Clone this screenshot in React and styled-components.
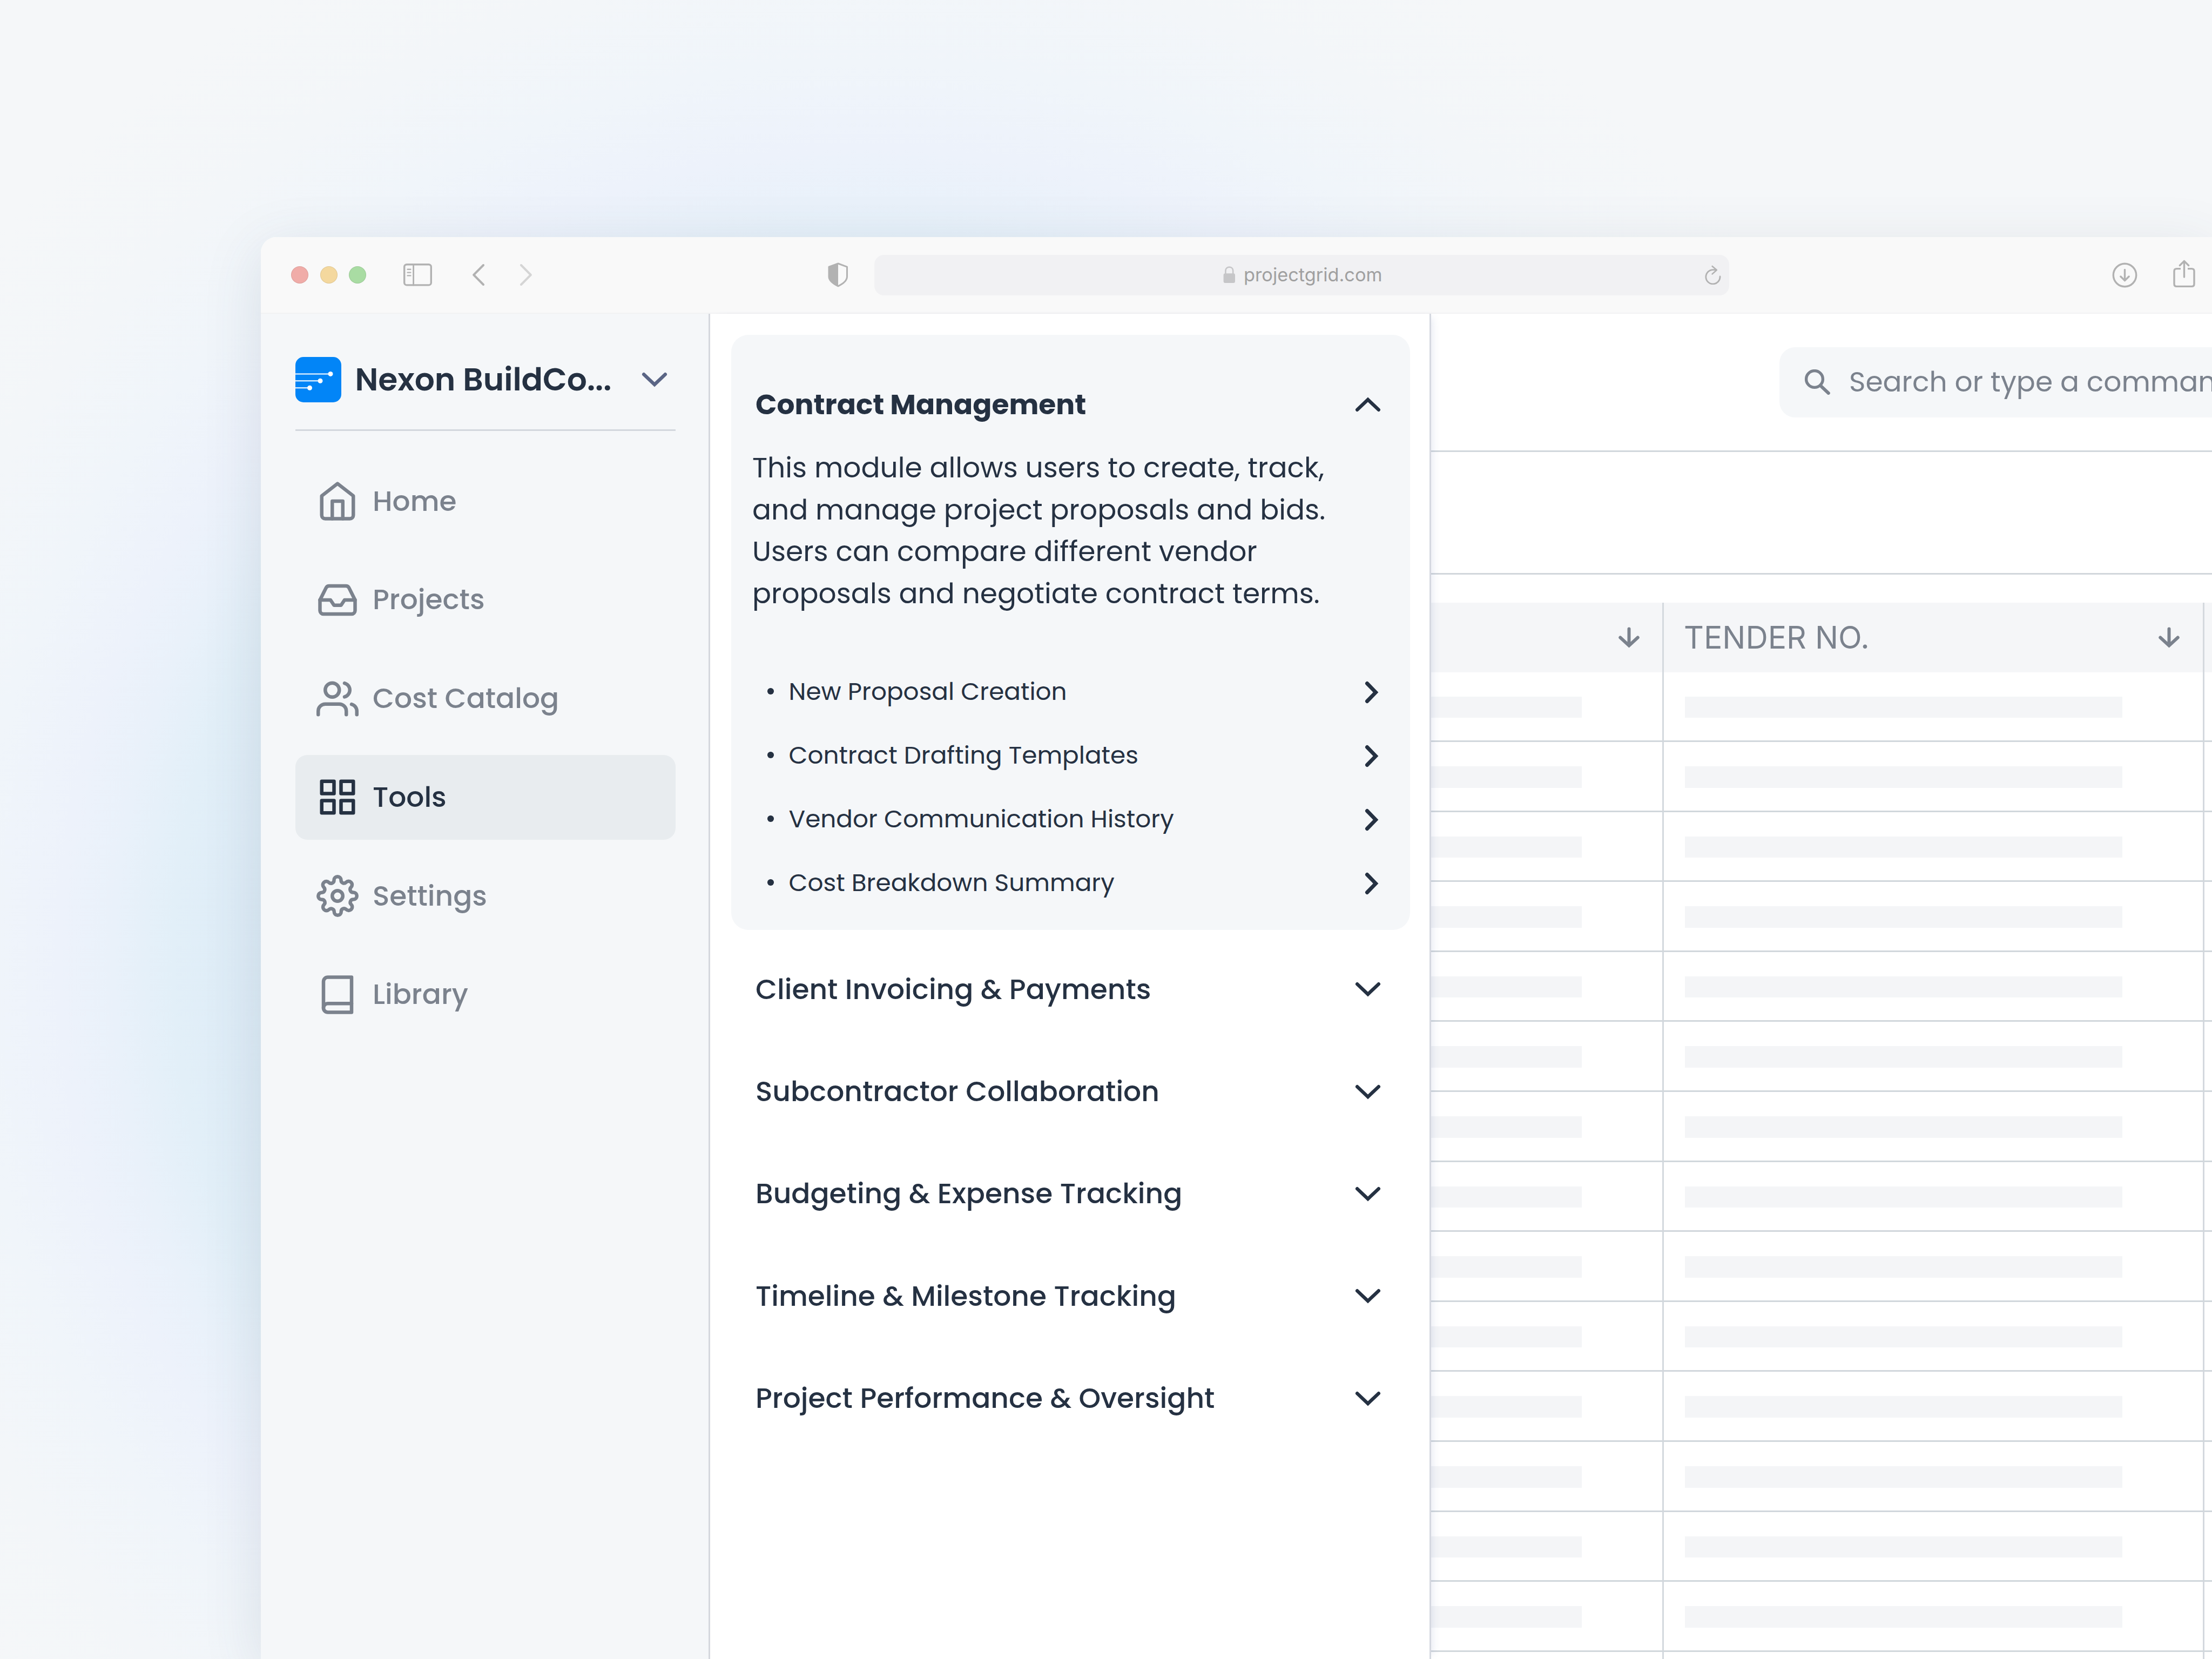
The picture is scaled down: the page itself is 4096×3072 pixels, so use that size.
import React, { useState } from "react"
import styled, { createGlobalStyle, css } from "styled-components"
import { FiHome, FiInbox, FiUsers, FiGrid, FiSettings, FiBook } from "react-icons/fi"

const GlobalStyle = createGlobalStyle`
  *, *::before, *::after {
    box-sizing: border-box;
  }
  body {
    margin: 0;
    font-family: "Poppins", "Inter", sans-serif;
    color: #253142;
  }
`

const Page = styled.div`
  width: 4096px;
  height: 3072px;
  padding: 439px 0 0 483px;
  overflow: hidden;
  background: radial-gradient(
      circle at 1610px 1775px,
      #cfe4f5 0,
      #dbeaf6 1080px,
      #e2eff8 1290px,
      #e9f1fa 1400px,
      #edf2fb 1500px,
      #f0f5fa 1660px,
      #f3f6f9 1850px,
      #f5f7f9 2100px
    )
    #f5f7f9;
`

const Window = styled.div`
  display: flex;
  flex-direction: column;
  height: 2633px;
  border-top-left-radius: 29px;
  overflow: hidden;
  background: #fff;
`

const WindowShadow = styled.div`
  border-top-left-radius: 29px;
  box-shadow: 0 24px 110px rgba(60, 75, 95, 0.13);
`

const Toolbar = styled.div`
  display: flex;
  align-items: center;
  flex: none;
  height: 142px;
  padding-left: 56px;
  border-bottom: 2px solid #f2f2f3;
  background: #f9f9f9;
  color: #b2b2b2;
`

const Lights = styled.div`
  display: flex;
  gap: 21.7px;
`

const Light = styled.span`
  width: 32px;
  height: 32px;
  border-radius: 50%;
  border: 1px solid rgba(0, 0, 0, 0.08);
  background: ${(props) => props.$color};
`

const ToolIcon = styled.svg`
  flex: none;
  width: ${(props) => props.$w}px;
  height: ${(props) => props.$h}px;
  margin-left: ${(props) => props.$gap}px;
  margin-top: ${(props) => props.$drop || 0}px;
  fill: none;
  stroke: currentColor;
  stroke-width: 3.4;
  stroke-linecap: round;
  stroke-linejoin: round;
  opacity: ${(props) => (props.$faded ? 0.5 : 1)};
`

const AddressBar = styled.div`
  display: flex;
  align-items: center;
  flex: none;
  width: 1583px;
  height: 75px;
  margin-left: 48px;
  padding: 0 15.5px 0 646px;
  border-radius: 18px;
  background: #f1f1f3;
`

const Url = styled.span`
  flex: 1;
  margin-left: 14.5px;
  font-family: "Inter", sans-serif;
  font-size: 34.3px;
  line-height: 44px;
  color: #a0a0a0;
`

const Body = styled.div`
  display: flex;
  flex: 1;
  min-height: 0;
`

const Sidebar = styled.aside`
  flex: none;
  width: 832px;
  padding: 79px 61px 0 64px;
  border-right: 3px solid #d5d8de;
  background: #f5f7f9;
`

const Company = styled.div`
  display: flex;
  align-items: center;
  height: 138px;
  padding: 0 15px 50px 0;
  border-bottom: 3px solid #d3d7dd;
`

const CompanyName = styled.span`
  flex: 1;
  margin-left: 25.5px;
  font-size: 58.25px;
  font-weight: 600;
  line-height: 84px;
  white-space: nowrap;
`

const Nav = styled.nav`
  display: flex;
  flex-direction: column;
  gap: 25.75px;
  margin-top: 51.5px;
`

const NavItem = styled.div`
  display: flex;
  align-items: center;
  gap: 26px;
  height: 157px;
  padding-left: 39px;
  border-radius: 22px;
  font-size: 51.85px;
  font-weight: 500;
  color: #7b828d;

  svg {
    width: 78px;
    height: 78px;
  }

  ${(props) =>
    props.$active &&
    css`
      background: #e8ecef;
      color: #253142;
    `}
`

const Panel = styled.section`
  position: relative;
  z-index: 1;
  flex: none;
  width: 1335px;
  padding: 38.5px 36.5px 0 39px;
  border-right: 3px solid #d5d8e0;
  background: #fff;
  box-shadow: 10px 0 14px -8px rgba(90, 105, 165, 0.16);
`

const Card = styled.div`
  height: 1102px;
  margin-bottom: 16.2px;
  padding-top: 89.5px;
  border-radius: 32px;
  background: #f5f7f9;
`

const ModuleRow = styled.div`
  display: flex;
  align-items: center;
  justify-content: space-between;
  height: ${(props) => (props.$open ? 80 : 189.3)}px;
  padding: 0 54px 0 45px;
  font-size: 51.85px;
  font-weight: ${(props) => (props.$open ? 700 : 500)};
`

const Description = styled.p`
  margin: 39px 0 83px;
  padding-left: 39px;
  font-size: 51.85px;
  line-height: 77.5px;
  white-space: pre-line;
`

const SubItem = styled.div`
  display: flex;
  align-items: center;
  height: 118px;
  padding: 0 58px 0 67px;
  font-size: 45.35px;
`

const Bullet = styled.span`
  width: 11.5px;
  height: 11.5px;
  margin-right: 28px;
  border-radius: 50%;
  background: #253142;
`

const SubLabel = styled.span`
  flex: 1;
`

const Chevron = styled.svg`
  flex: none;
  width: 48px;
  height: 28px;
  fill: none;
  stroke: ${(props) => props.$color || "#253142"};
  stroke-width: 6.4;
  stroke-linecap: round;
  transform: ${(props) => (props.$up ? "rotate(180deg)" : "none")};
`

const SmallChevron = styled.svg`
  flex: none;
  width: 26px;
  height: 42px;
  margin-top: 3px;
  fill: none;
  stroke: #253142;
  stroke-width: 7;
  stroke-linecap: round;
`

const Main = styled.main`
  flex: 1;
  min-width: 0;
  overflow: hidden;
  background: #fff;
`

const TopBar = styled.div`
  display: flex;
  align-items: center;
  height: 256px;
  border-bottom: 3px solid #d1d7dc;
`

const SearchBox = styled.div`
  display: flex;
  align-items: center;
  flex: none;
  width: 1100px;
  height: 130px;
  margin-left: 644.5px;
  padding-left: 47px;
  border-radius: 29px;
  background: #f5f7f9;
  color: #7b828d;
  font-size: 51.85px;
`

const SearchIcon = styled.svg`
  width: 47px;
  height: 47px;
  margin-right: 35.5px;
  fill: none;
  stroke: currentColor;
`

const FilterBar = styled.div`
  height: 226.5px;
  border-bottom: 3px solid #d1d7dc;
`

const Table = styled.div`
  margin-top: 52px;
`

const columns = "431px 1000.5px 1fr"

const HeaderRow = styled.div`
  display: grid;
  grid-template-columns: ${columns};
  height: 129px;
  background: #f5f6f8;
`

const HeaderCell = styled.div`
  display: flex;
  align-items: center;
  justify-content: space-between;
  padding: 0 41.5px 0 37px;
  border-right: 3px solid #d4d9de;
  font-family: "Inter", sans-serif;
  font-size: 57.2px;
  color: #7b828d;

  &:last-child {
    border-right: none;
  }
`

const Row = styled.div`
  display: grid;
  grid-template-columns: ${columns};
  height: 129.6px;
  border-bottom: 3px solid #d1d7dc;
`

const Cell = styled.div`
  padding: 45px 0 0 ${(props) => props.$inset}px;
  border-right: 3px solid #d4d9de;

  &:last-child {
    border-right: none;
  }
`

const Skeleton = styled.div`
  width: ${(props) => props.$w}px;
  height: 39.5px;
  background: #f4f5f7;
`

const SortArrow = styled.svg`
  width: 41px;
  height: 40px;
  margin-top: 2px;
  fill: none;
  stroke: #7b828d;
  stroke-width: 6;
  stroke-linecap: round;
`

const navItems = [
  { label: "Home", icon: FiHome },
  { label: "Projects", icon: FiInbox },
  { label: "Cost Catalog", icon: FiUsers },
  { label: "Tools", icon: FiGrid },
  { label: "Settings", icon: FiSettings },
  { label: "Library", icon: FiBook },
]

const subItems = [
  "New Proposal Creation",
  "Contract Drafting Templates",
  "Vendor Communication History",
  "Cost Breakdown Summary",
]

const modules = [
  "Client Invoicing & Payments",
  "Subcontractor Collaboration",
  "Budgeting & Expense Tracking",
  "Timeline & Milestone Tracking",
  "Project Performance & Oversight",
]

const description = `This module allows users to create, track,
and manage project proposals and bids.
Users can compare different vendor
proposals and negotiate contract terms.`

const ChevronIcon = (props) => (
  <Chevron viewBox="0 0 48 28" {...props}>
    <path d="M4.2 4.2 L24 23 L43.8 4.2" />
  </Chevron>
)

const ArrowDown = () => (
  <SortArrow viewBox="0 0 41 40">
    <path d="M20.5 3.5 V33 M4.3 19.5 L20.5 34.5 L36.7 19.5" />
  </SortArrow>
)

const BrowserToolbar = () => (
  <Toolbar>
    <Lights>
      <Light $color="#f0aca8" />
      <Light $color="#f4d89e" />
      <Light $color="#a9dca3" />
    </Lights>
    <ToolIcon $w={53} $h={42} $gap={68.6} viewBox="0 0 53 42">
      <rect x="1.7" y="1.7" width="49.6" height="38.2" rx="4.5" />
      <path d="M18.6 2 V40" strokeWidth="2.8" />
      <path d="M7.6 10.8 H13.4 M7.6 16.6 H13.4 M7.6 22.4 H13.4" strokeWidth="2.4" />
    </ToolIcon>
    <ToolIcon $w={22} $h={40} $gap={75} viewBox="0 0 22 40">
      <path d="M20 2 L2.2 20 L20 38" strokeWidth="4" />
    </ToolIcon>
    <ToolIcon $w={22} $h={40} $gap={66.5} $faded viewBox="0 0 22 40">
      <path d="M2 2 L19.8 20 L2 38" strokeWidth="4" />
    </ToolIcon>
    <ToolIcon $w={38} $h={46} $gap={548} viewBox="0 0 38 46">
      <path d="M19 2 L35.5 8.2 V26 C35.5 34 28 39.5 19 43.8 C10 39.5 2 34 2 26 V8.2 Z" strokeWidth="3" />
      <path d="M19 1 V44.5 C9.5 40 1 34 1 26 V7.6 Z" fill="currentColor" stroke="none" />
    </ToolIcon>
    <AddressBar>
      <ToolIcon $w={23} $h={32} $gap={0} viewBox="0 0 23 32" color="#c6c6c8">
        <path d="M4.4 14 V8.4 C4.4 -0.6 18.2 -0.6 18.2 8.4 V14" strokeWidth="2.6" />
        <rect x="0.6" y="13.2" width="21.4" height="17.8" rx="3" fill="currentColor" stroke="none" />
      </ToolIcon>
      <Url>projectgrid.com</Url>
      <ToolIcon $w={30} $h={36} $gap={0} viewBox="0 0 30 36">
        <path d="M28 21 A13.1 13.1 0 1 1 14.9 8.6 H21" strokeWidth="2.8" />
        <path d="M13.6 2 L21.8 9 L13.6 16.4" strokeWidth="2.6" />
      </ToolIcon>
    </AddressBar>
    <ToolIcon $w={47} $h={47} $gap={708.5} viewBox="0 0 47 47">
      <circle cx="23.5" cy="23.5" r="21.2" />
      <path d="M23.5 13.4 V33.5 M15.9 26 L23.5 33.6 L31.1 26" />
    </ToolIcon>
    <ToolIcon $w={41} $h={52} $gap={66} $drop={-4} viewBox="0 0 41 52">
      <path d="M14 16.6 H6.5 Q2 16.6 2 21.1 V44.7 Q2 49.4 6.5 49.4 H34.5 Q39 49.4 39 44.7 V21.1 Q39 16.6 34.5 16.6 H27" strokeLinecap="butt" />
      <path d="M20.5 2.6 V32 M12.4 10.5 L20.5 2.4 L28.6 10.5" />
    </ToolIcon>
  </Toolbar>
)

const Logo = () => (
  <svg width="85" height="84" viewBox="0 0 85 84">
    <rect width="85" height="84" rx="15" fill="#0285f7" />
    <path d="M0 31.4 H62 M0 44.2 H43 M0 57.2 H24" stroke="#fff" strokeWidth="2" />
    <g fill="#fff">
      <circle cx="65" cy="31.4" r="4.5" />
      <circle cx="46" cy="44.2" r="4.5" />
      <circle cx="26.5" cy="57.2" r="4.5" />
    </g>
  </svg>
)

const App = () => {
  const [active, setActive] = useState("Tools")

  return (
    <Page>
      <GlobalStyle />
      <WindowShadow>
        <Window>
          <BrowserToolbar />
          <Body>
            <Sidebar>
              <Company>
                <Logo />
                <CompanyName>Nexon BuildCo...</CompanyName>
                <ChevronIcon $color="#5a6585" />
              </Company>
              <Nav>
                {navItems.map(({ label, icon: Icon }) => (
                  <NavItem key={label} $active={label === active} onClick={() => setActive(label)}>
                    <Icon />
                    {label}
                  </NavItem>
                ))}
              </Nav>
            </Sidebar>

            <Panel>
              <Card>
                <ModuleRow $open>
                  Contract Management
                  <ChevronIcon $up />
                </ModuleRow>
                <Description>{description}</Description>
                {subItems.map((item) => (
                  <SubItem key={item}>
                    <Bullet />
                    <SubLabel>{item}</SubLabel>
                    <SmallChevron viewBox="0 0 26 42">
                      <path d="M4.5 4.5 L20.5 21 L4.5 37.5" />
                    </SmallChevron>
                  </SubItem>
                ))}
              </Card>
              {modules.map((name) => (
                <ModuleRow key={name}>
                  {name}
                  <ChevronIcon />
                </ModuleRow>
              ))}
            </Panel>

            <Main>
              <TopBar>
                <SearchBox>
                  <SearchIcon viewBox="0 0 47 47">
                    <circle cx="18" cy="18" r="15.4" strokeWidth="5.4" />
                    <path d="M30.8 31.8 L43.8 44" strokeWidth="6" strokeLinecap="round" />
                  </SearchIcon>
                  Search or type a command
                </SearchBox>
              </TopBar>
              <FilterBar />
              <Table>
                <HeaderRow>
                  <HeaderCell>
                    <span />
                    <ArrowDown />
                  </HeaderCell>
                  <HeaderCell>
                    TENDER NO.
                    <ArrowDown />
                  </HeaderCell>
                  <HeaderCell />
                </HeaderRow>
                {Array.from({ length: 15 }, (_, i) => (
                  <Row key={i}>
                    <Cell $inset={0}>
                      <Skeleton $w={279} />
                    </Cell>
                    <Cell $inset={39}>
                      <Skeleton $w={810} />
                    </Cell>
                    <Cell $inset={0} />
                  </Row>
                ))}
              </Table>
            </Main>
          </Body>
        </Window>
      </WindowShadow>
    </Page>
  )
}

export default App
